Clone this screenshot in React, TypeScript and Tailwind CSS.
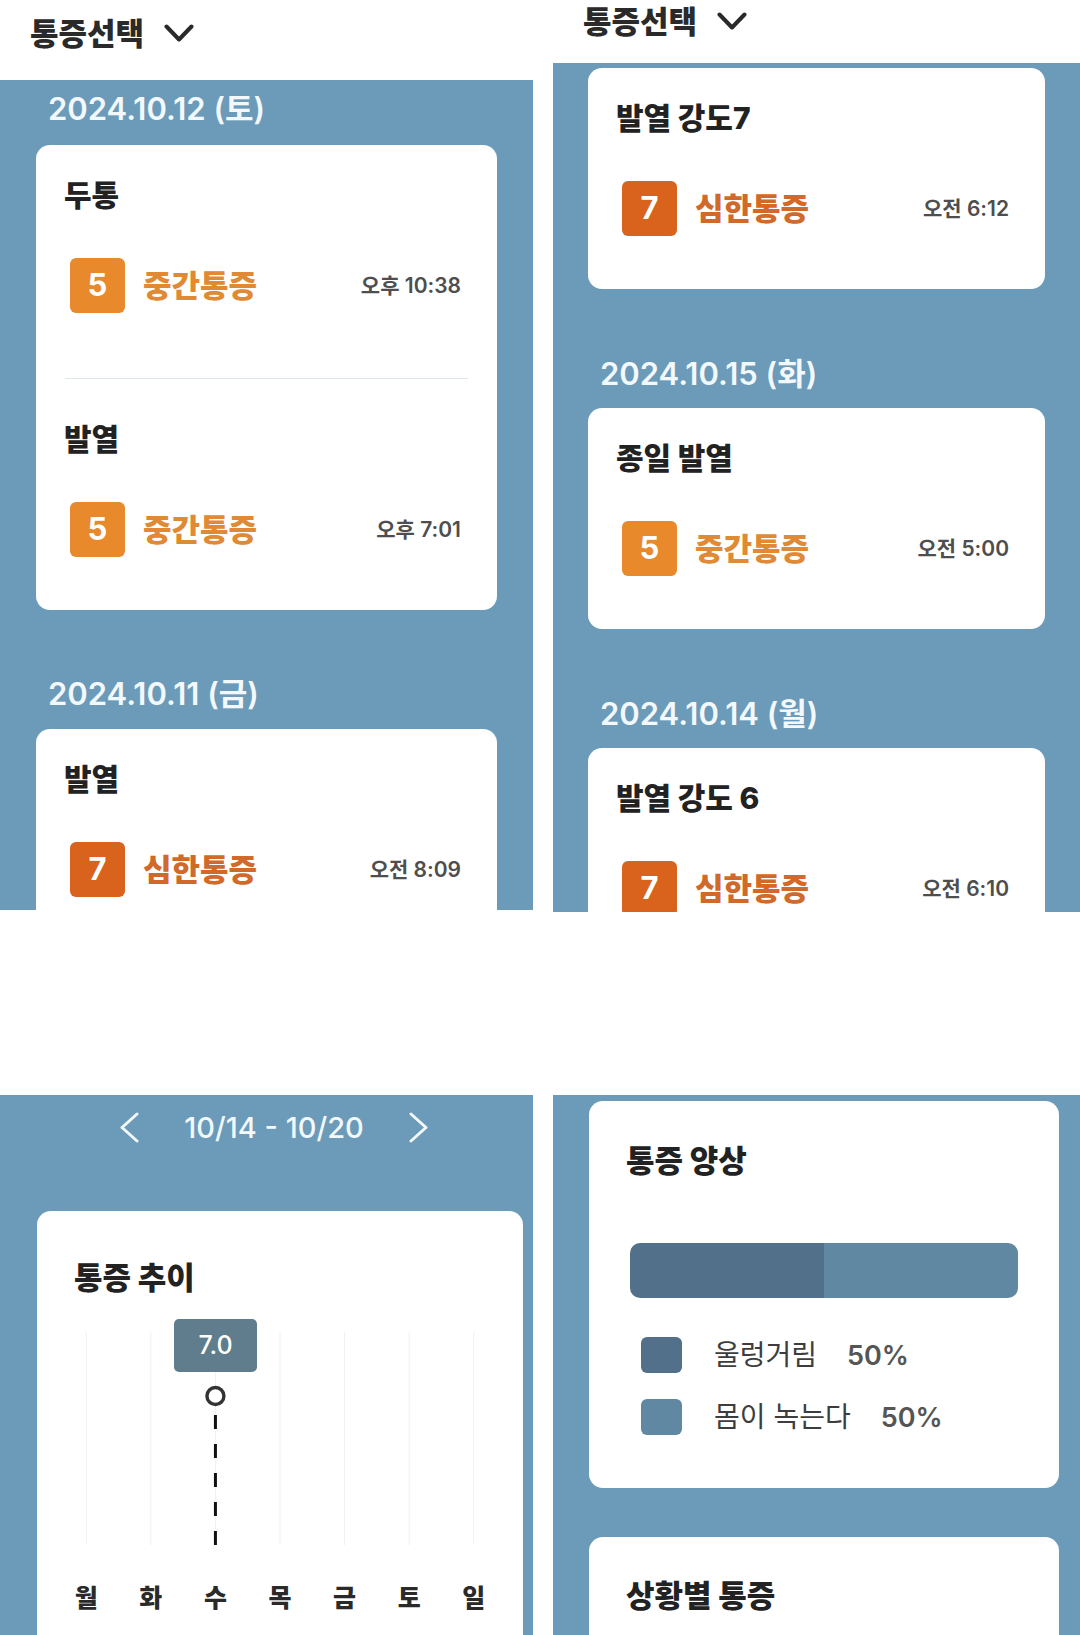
type Entry = {
  title: string;
  level: 5 | 7;
  time: string;
};

const levelStyle = {
  5: { box: "bg-[#e8892c]", text: "text-[#e08a35]", label: "중간통증" },
  7: { box: "bg-[#d9621c]", text: "text-[#d0692a]", label: "심한통증" },
};

const Chevron = ({ dir, className }: { dir: "down" | "left" | "right"; className?: string }) => {
  if (dir === "down")
    return (
      <svg width="30" height="19" viewBox="0 0 30 19" className={className}>
        <polyline points="2.5,2.5 15,15.5 27.5,2.5" fill="none" stroke="currentColor" strokeWidth="4" strokeLinecap="round" strokeLinejoin="round" />
      </svg>
    );
  const pts = dir === "left" ? "18,2 3,15.5 18,29" : "3,2 18,15.5 3,29";
  return (
    <svg width="21" height="31" viewBox="0 0 21 31" className={className}>
      <polyline points={pts} fill="none" stroke="currentColor" strokeWidth="3" strokeLinecap="round" strokeLinejoin="round" />
    </svg>
  );
};

// the right screenshot is scrolled up a little, so its header is shorter
const Header = ({ scrolled }: { scrolled?: boolean }) => (
  <div className={`shrink-0 bg-white pl-[30px] ${scrolled ? "h-[63px] pt-[4px]" : "h-[80px] pt-[16px]"}`}>
    <div className="flex items-center">
      <span className="text-[31px] font-extrabold leading-[1.15] text-[#2a2a2a]">통증선택</span>
      <Chevron dir="down" className="ml-[20px] text-[#2a2a2a]" />
    </div>
  </div>
);

const DateLabel = ({ text }: { text: string }) => (
  <div className="ml-[12px] text-[31px] font-semibold leading-none text-[#f2f8fb]">{text}</div>
);

const PainEntry = ({ entry }: { entry: Entry }) => {
  const s = levelStyle[entry.level];
  return (
    <div>
      <div className="pl-[28px] text-[30px] font-extrabold leading-none text-[#222]">{entry.title}</div>
      <div className="mt-[48px] flex items-center pl-[34px] pr-[36px]">
        <div className={`flex h-[55px] w-[55px] items-center justify-center rounded-[6px] text-[31px] font-bold text-white ${s.box}`}>
          {entry.level}
        </div>
        <span className={`ml-[18px] text-[31px] font-extrabold leading-none ${s.text}`}>{s.label}</span>
        <span className="ml-auto text-[21px] font-semibold leading-none text-[#4e4e4e]">{entry.time}</span>
      </div>
    </div>
  );
};

const PainCard = ({ entries }: { entries: Entry[] }) => (
  <div className="rounded-[14px] bg-white pt-[35px] pb-[53px]">
    {entries.map((e, i) => (
      <div key={i}>
        {i > 0 && <div className="mx-[29px] mt-[65px] mb-[45px] h-px bg-[#dde6ea]" />}
        <PainEntry entry={e} />
      </div>
    ))}
  </div>
);

const days = ["월", "화", "수", "목", "금", "토", "일"];

const TrendCard = () => {
  const colW = 452 / 7;
  return (
    <div className="ml-[37px] w-[486px] rounded-[14px] bg-white pt-[51px] pb-[40px]">
      <div className="pl-[37px] text-[31px] font-extrabold leading-none text-[#222]">통증 추이</div>
      <div className="relative mx-[17px] mt-[26px] h-[227px]">
        <svg width="452" height="227" className="block">
          {days.map((_, i) => (
            <line key={i} x1={colW * i + colW / 2} x2={colW * i + colW / 2} y1={13} y2={226} stroke="#eef0f3" strokeWidth={1} />
          ))}
          <line x1={colW * 2.5} x2={colW * 2.5} y1={96} y2={227} stroke="#111" strokeWidth={3} strokeDasharray="14 15" />
          <circle cx={colW * 2.5} cy={77} r={8.5} fill="#fff" stroke="#333" strokeWidth={3.4} />
        </svg>
        <div className="absolute left-[120px] top-0 flex h-[53px] w-[83px] items-center justify-center rounded-[5px] bg-[#5f7d8c] text-[25px] font-medium text-white">
          7.0
        </div>
      </div>
      <div className="mx-[17px] mt-[40px] grid grid-cols-7">
        {days.map((d) => (
          <div key={d} className="text-center text-[25px] font-extrabold leading-none text-[#2a2a2a]">{d}</div>
        ))}
      </div>
    </div>
  );
};

const Legend = ({ color, label }: { color: string; label: string }) => (
  <div className="flex items-center">
    <div className={`h-[36px] w-[41px] rounded-[6px] ${color}`} />
    <span className="ml-[32px] text-[28px] leading-none text-[#3d3d3d]">{label}</span>
    <span className="ml-[30px] text-[27px] font-semibold leading-none text-[#555]">50%</span>
  </div>
);

export default function App() {
  return (
    <div className="h-[1635px] w-[1080px] overflow-hidden bg-white font-[Inter,'Noto_Sans_CJK_KR',sans-serif]">
      {/* top screenshots */}
      <div className="flex items-start gap-[20px]">
        <div className="flex h-[910px] w-[533px] flex-col overflow-hidden">
          <Header />
          <div className="flex-1 bg-[#6b9bb9] px-[36px] pt-[13px]">
            <DateLabel text="2024.10.12 (토)" />
            <div className="mt-[21px]">
              <PainCard
                entries={[
                  { title: "두통", level: 5, time: "오후 10:38" },
                  { title: "발열", level: 5, time: "오후 7:01" },
                ]}
              />
            </div>
            <div className="mt-[68px]">
              <DateLabel text="2024.10.11 (금)" />
            </div>
            <div className="mt-[20px]">
              <PainCard entries={[{ title: "발열", level: 7, time: "오전 8:09" }]} />
            </div>
          </div>
        </div>

        <div className="flex h-[912px] w-[527px] flex-col overflow-hidden">
          <Header scrolled />
          <div className="flex-1 bg-[#6b9bb9] pl-[35px] pr-[35px] pt-[5px]">
            <PainCard entries={[{ title: "발열 강도7", level: 7, time: "오전 6:12" }]} />
            <div className="mt-[69px]">
              <DateLabel text="2024.10.15 (화)" />
            </div>
            <div className="mt-[19px]">
              <PainCard entries={[{ title: "종일 발열", level: 5, time: "오전 5:00" }]} />
            </div>
            <div className="mt-[69px]">
              <DateLabel text="2024.10.14 (월)" />
            </div>
            <div className="mt-[19px]">
              <PainCard entries={[{ title: "발열 강도 6", level: 7, time: "오전 6:10" }]} />
            </div>
          </div>
        </div>
      </div>

      {/* bottom screenshots */}
      <div className="mt-[183px] flex items-start gap-[20px]">
        <div className="h-[540px] w-[533px] overflow-hidden bg-[#6b9bb9]">
          <div className="flex h-[64px] items-center justify-center pl-[37px] pr-[22px] text-[#f2f8fb]">
            <Chevron dir="left" />
            <span className="mx-[44px] text-[29px] font-medium leading-none">10/14 - 10/20</span>
            <Chevron dir="right" />
          </div>
          <div className="mt-[52px]">
            <TrendCard />
          </div>
        </div>

        <div className="h-[540px] w-[527px] overflow-hidden bg-[#6b9bb9] pl-[36px] pt-[6px]">
          <div className="w-[470px] rounded-[14px] bg-white pt-[44px] pb-[53px]">
            <div className="pl-[37px] text-[31px] font-extrabold leading-none text-[#222]">통증 양상</div>
            <div className="ml-[41px] mt-[67px] flex h-[55px] w-[388px] overflow-hidden rounded-[10px]">
              <div className="w-1/2 bg-[#52708a]" />
              <div className="w-1/2 bg-[#6088a2]" />
            </div>
            <div className="ml-[52px] mt-[39px] flex flex-col gap-[26px]">
              <Legend color="bg-[#52708a]" label="울렁거림" />
              <Legend color="bg-[#6088a2]" label="몸이 녹는다" />
            </div>
          </div>
          <div className="mt-[49px] w-[470px] rounded-[14px] bg-white pt-[43px] pb-[60px]">
            <div className="pl-[37px] text-[31px] font-extrabold leading-none text-[#222]">상황별 통증</div>
          </div>
        </div>
      </div>
    </div>
  );
}
